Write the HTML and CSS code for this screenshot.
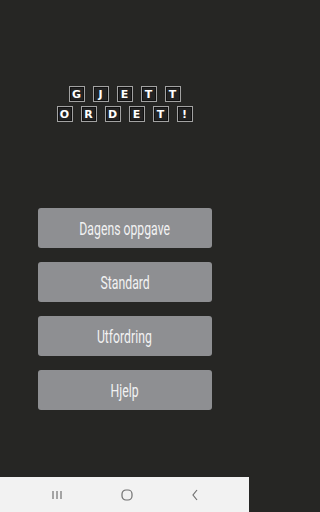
FILE: index.html
```html
<!DOCTYPE html>
<html lang="no">
<head>
<meta charset="utf-8">
<title>Gjett ordet</title>
<link rel="stylesheet" href="styles.css">
</head>
<body>
<div class="screen">
  <main class="main">
    <div class="logo">
      <div class="logo-row">
        <span class="tile">G</span><span class="tile">J</span><span class="tile">E</span><span class="tile">T</span><span class="tile">T</span>
      </div>
      <div class="logo-row">
        <span class="tile">O</span><span class="tile">R</span><span class="tile">D</span><span class="tile">E</span><span class="tile">T</span><span class="tile">!</span>
      </div>
    </div>
    <div class="menu">
      <button class="btn"><span class="btn-label">Dagens oppgave</span></button>
      <button class="btn"><span class="btn-label">Standard</span></button>
      <button class="btn"><span class="btn-label">Utfordring</span></button>
      <button class="btn"><span class="btn-label">Hjelp</span></button>
    </div>
  </main>
  <nav class="navbar">
    <svg class="nav-icon" width="12" height="10" viewBox="0 0 12 10"><g stroke="#707070" stroke-width="1.2"><line x1="2" y1="1" x2="2" y2="9"/><line x1="6" y1="1" x2="6" y2="9"/><line x1="10" y1="1" x2="10" y2="9"/></g></svg>
    <svg class="nav-icon" width="12" height="12" viewBox="0 0 12 12"><rect x="1" y="1" width="10" height="10" rx="4" fill="none" stroke="#707070" stroke-width="1.2"/></svg>
    <svg class="nav-icon" width="8" height="12" viewBox="0 0 8 12"><polyline points="6,1 2,6 6,11" fill="none" stroke="#707070" stroke-width="1.2"/></svg>
  </nav>
</div>
</body>
</html>
```
FILE: styles.css
```css
html, body {
  margin: 0;
  padding: 0;
}
body {
  width: 249px;
  height: 512px;
  background: #262624;
  overflow: hidden;
  font-family: Roboto, "Liberation Sans", sans-serif;
}
.screen {
  display: flex;
  flex-direction: column;
  height: 512px;
}
.main {
  flex: 1;
  display: flex;
  flex-direction: column;
  align-items: center;
  padding-top: 86px;
  box-sizing: border-box;
}
.logo {
  display: flex;
  flex-direction: column;
  align-items: center;
  gap: 4px;
}
.logo-row {
  display: flex;
  gap: 8px;
}
.tile {
  width: 16px;
  height: 16px;
  box-sizing: border-box;
  border: 1px solid #a2a2a2;
  box-shadow: inset 0 0 0 1px #111;
  background: #232323;
  color: #ffffff;
  font-family: "DejaVu Sans", sans-serif;
  font-weight: bold;
  font-size: 11px;
  display: flex;
  align-items: center;
  justify-content: center;
  line-height: 1;
}
.menu {
  margin-top: 86px;
  display: flex;
  flex-direction: column;
  gap: 14px;
}
.btn {
  width: 174px;
  height: 40px;
  margin-left: 0.5px;
  border: none;
  border-radius: 3px;
  background: #8e8f92;
  color: #f2f2f2;
  padding: 0;
  display: flex;
  align-items: center;
  justify-content: center;
  font-family: Roboto, "Liberation Sans", sans-serif;
  font-size: 18px;
  font-weight: 400;
}
.btn-label {
  display: inline-block;
  transform: scaleX(0.68);
  white-space: nowrap;
}
.navbar {
  height: 35px;
  background: #f2f2f2;
  display: flex;
  align-items: center;
  justify-content: space-between;
  padding: 0 50px 0 51px;
  box-sizing: border-box;
}
.nav-icon {
  display: block;
}
```
